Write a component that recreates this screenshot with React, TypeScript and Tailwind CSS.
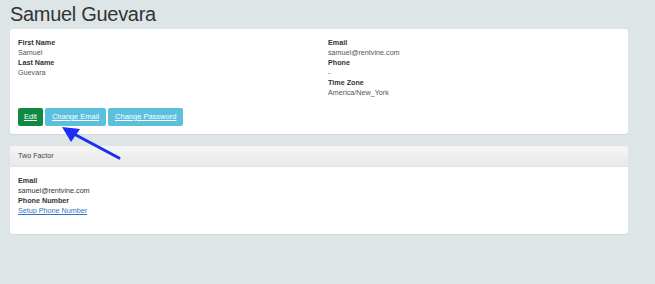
import React from 'react'

const font = { fontFamily: '"Liberation Sans", Arial, Helvetica, sans-serif' }

function Field({ label, value, muted }: { label: string; value: React.ReactNode; muted?: boolean }) {
  return (
    <div>
      <div className="font-bold text-[#333]">{label}</div>
      <div className={muted ? 'text-[#555]' : 'text-[#333]'}>{value}</div>
    </div>
  )
}

export default function App() {
  return (
    <div className="relative min-h-[284px] bg-[#dde5e6] pl-[10px] pt-[2px]" style={font}>
      <h1 className="mb-[3px] text-[20px] leading-[24px] tracking-[-0.3px] text-[#333]">Samuel Guevara</h1>

      {/* Profile card */}
      <div className="w-[618px] rounded-[3px] bg-white px-[8px] pt-[9px] pb-[8px] text-[7.2px] leading-[10px] shadow-[0_1px_1px_rgba(0,0,0,0.06)]">
        <div className="grid grid-cols-[310px_1fr]">
          <div>
            <Field label="First Name" value="Samuel" muted />
            <Field label="Last Name" value="Guevara" muted />
          </div>
          <div>
            <Field label="Email" value="samuel@rentvine.com" muted />
            <Field label="Phone" value="-" muted />
            <Field label="Time Zone" value="America/New_York" muted />
          </div>
        </div>
        <div className="mt-[10px] flex gap-[2px]">
          <button className="h-[18px] rounded-[2px] bg-[#0e8a43] px-[6px] text-[7.5px] text-white underline">Edit</button>
          <button className="h-[18px] rounded-[2px] bg-[#5bc0de] px-[7px] text-[7.5px] text-white underline">Change Email</button>
          <button className="h-[18px] rounded-[2px] bg-[#5bc0de] px-[7px] text-[7.5px] text-white underline">Change Password</button>
        </div>
      </div>

      {/* Two factor card */}
      <div className="mt-[12px] w-[618px] overflow-hidden rounded-[3px] bg-white text-[7.2px] leading-[10px] shadow-[0_1px_1px_rgba(0,0,0,0.06)]">
        <div className="flex h-[21px] items-center border-b border-[#e2e2e2] bg-gradient-to-b from-[#f5f5f5] to-[#e8e8e8] px-[8px] text-[#444]">
          Two Factor
        </div>
        <div className="px-[8px] pt-[9px] pb-[18px]">
          <Field label="Email" value="samuel@rentvine.com" />
          <Field
            label="Phone Number"
            value={<a href="#" className="text-[#2f75c7] underline">Setup Phone Number</a>}
          />
        </div>
      </div>

      {/* Annotation arrow */}
      <svg className="pointer-events-none absolute top-0 left-0" width="655" height="284" viewBox="0 0 655 284">
        <line x1="119" y1="158" x2="74" y2="134" stroke="#1d2ef2" strokeWidth="3" strokeLinecap="round" />
        <polygon points="62,127 80,129 71,142" fill="#1d2ef2" />
      </svg>
    </div>
  )
}
